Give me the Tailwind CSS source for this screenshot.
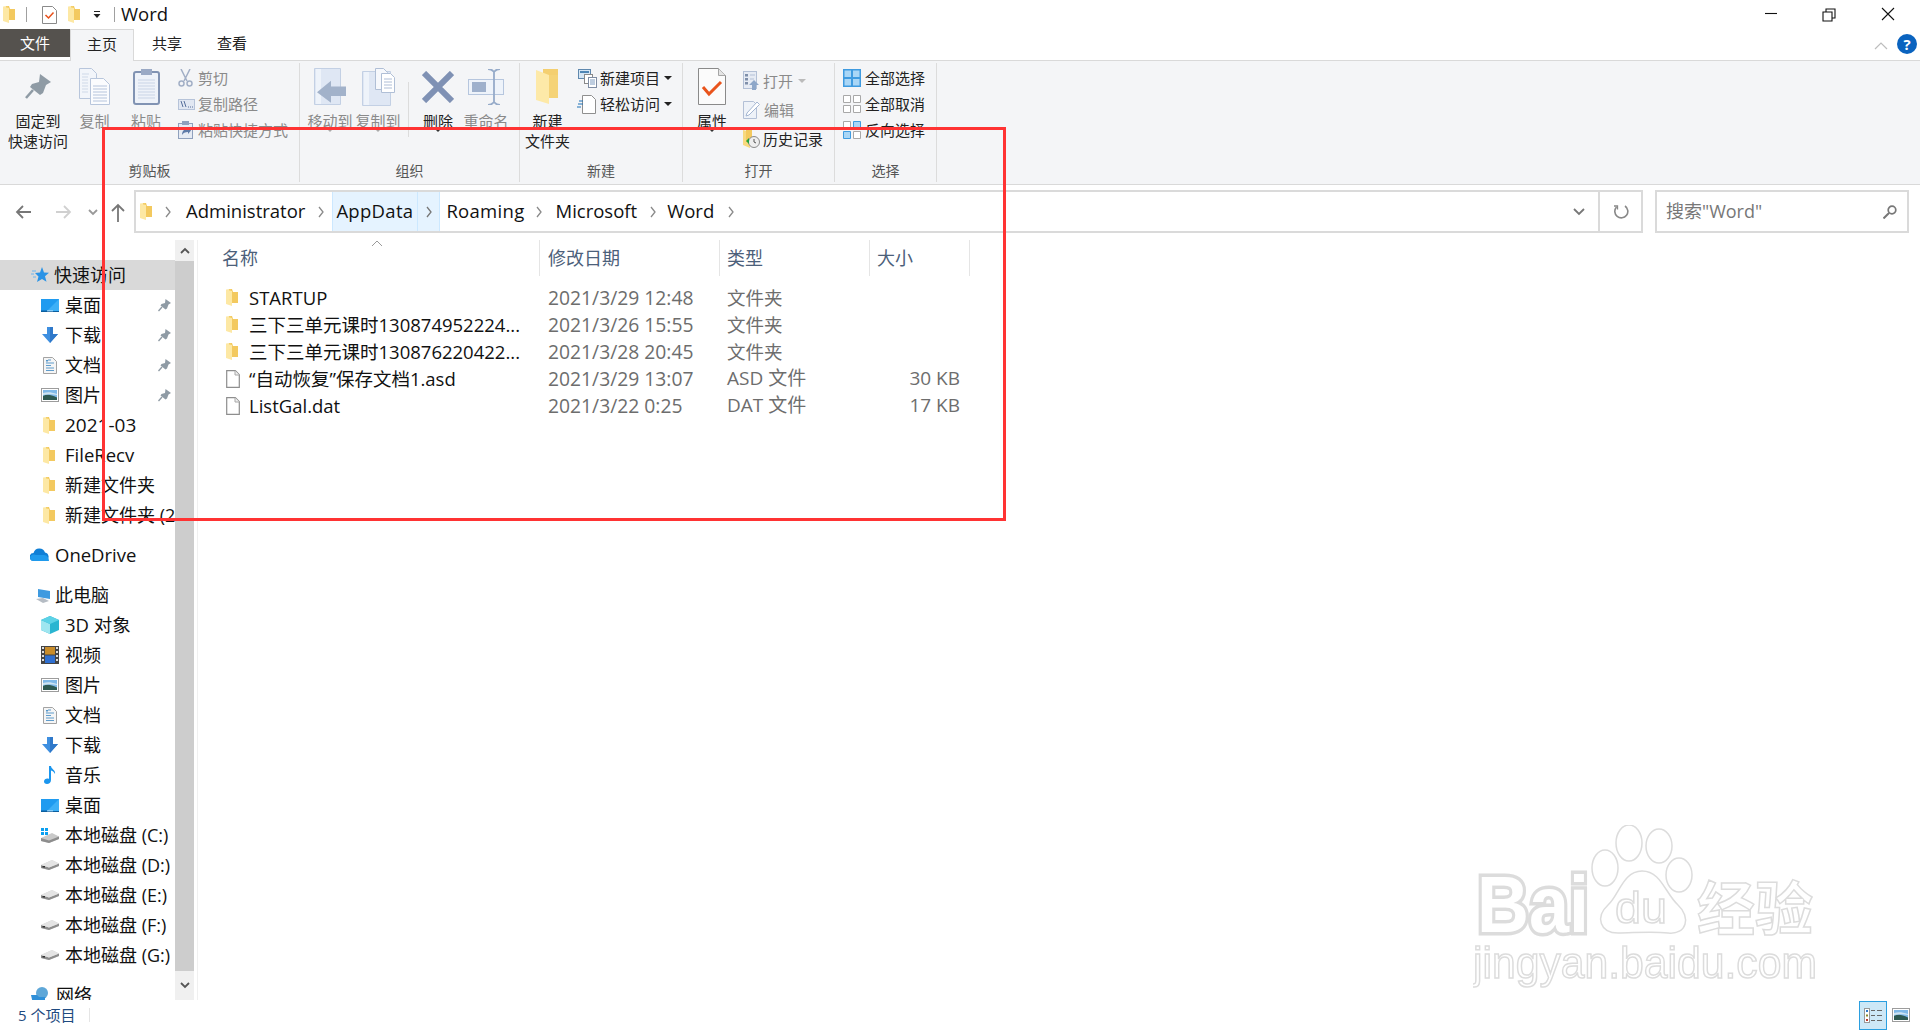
<!DOCTYPE html>
<html lang="zh-CN">
<head>
  <meta charset="UTF-8">
  <title>Word</title>
  <script src="https://cdn.jsdelivr.net/npm/@tailwindcss/browser@4"></script>
</head>
<body class="bg-white">

<!-- shared icons -->
<svg class="hidden">
  <symbol id="folder" viewBox="0 0 12 17"><path d="M3 0h3l1 3h5v11H3z" fill="#f3c95f"/><path d="M0 0.500l6 1.500v15l-6-2z" fill="#fde8a4"/><path d="M0 0.500h5v1.200z" fill="#f8d877"/></symbol>
  <symbol id="pin" viewBox="0 0 26 26"><path d="M15 0l11 8-5 3-3 8-3 2-10-8 2-3 7-2z" fill="#8f9ba5"/><path d="M8 16l-7 8" stroke="#8f9ba5" stroke-width="2.500"/></symbol>
  <symbol id="desktop" viewBox="0 0 18 13"><rect width="18" height="13" fill="#1f9bf0"/><rect y="11.500" width="18" height="1.500" fill="#0c5e9e"/><path d="M18 0v12H6z" fill="#3db0f7"/><rect x="6" y="11.500" width="6" height=".8" fill="#cfe9fb"/></symbol>
  <symbol id="download" viewBox="0 0 16 16"><path d="M5 0h6v7h5l-8 9-8-9h5z" fill="#3e8fe0"/><path d="M8 0h3v7h5l-8 9z" fill="#2f78c9"/></symbol>
  <symbol id="docs" viewBox="0 0 14 17"><path d="M.5.500h9l4 4v12H.500z" fill="#f5f5f5" stroke="#a3a3a3"/><path d="M5 3h3M3 6h8M3 8.500h5M3 11h8M3 13.500h8" stroke="#5f9ccc" stroke-width="1.200"/><path d="M3 3l2 0-1 2.500z" fill="#2f7fbf"/></symbol>
  <symbol id="pics" viewBox="0 0 18 14"><rect x=".5" y=".5" width="17" height="13" fill="#fff" stroke="#9c9c9c"/><rect x="2" y="2" width="14" height="10" fill="#7fb9e8"/><path d="M2 8c4-2 7-2 14 1.500V12H2z" fill="#2e5a52"/><path d="M2 5c4-1 8-1 14 1v1c-5-1-9-1-14 0z" fill="#cfe4f2"/></symbol>
  <symbol id="disk" viewBox="0 0 18 10"><path d="M0 5L11 0l7 3.500V6L8 10 0 8z" fill="#d2d2d2"/><path d="M0 5l8 2.500L18 3.500V6L8 10 0 8z" fill="#8d8d8d"/><path d="M0 5L11 0l7 3.500L8 7.500z" fill="#e4e4e4"/><rect x="1.500" y="6" width="2.500" height="1.500" fill="#333"/></symbol>
  <symbol id="file" viewBox="0 0 14 18"><path d="M.7.700h8.600l4 4v12.600H.700z" fill="#fff" stroke="#8e8e8e" stroke-width="1.200"/><path d="M9 .7v4.300h4.300" fill="#efefef" stroke="#a8a8a8"/></symbol>
</svg>

<div class="relative w-[1920px] h-[1030px] overflow-hidden flex flex-col bg-white text-[#111] [font-family:'Open_Sans','Noto_Sans_CJK_SC',sans-serif]">

  <!-- title bar -->
  <div class="h-[29px] flex items-center shrink-0">
    <svg class="ml-[3px] w-[12px] h-[17px]"><use href="#folder"/></svg>
    <div class="ml-[11px] w-px h-[15px] bg-[#a0a0a0]"></div>
    <svg class="ml-[15px] w-[15px] h-[18px]" viewBox="0 0 15 18"><path d="M.5.500h10l4 4v13H.500z" fill="#fff" stroke="#8a8a8a"/><path d="M3.500 9l3 3 5-5.500" fill="none" stroke="#e8501a" stroke-width="1.500"/></svg>
    <svg class="ml-[11px] w-[12px] h-[17px]"><use href="#folder"/></svg>
    <svg class="ml-[12px] w-[10px] h-[8px]" viewBox="0 0 10 8"><path d="M2 0h6v1H2zM1.500 3h7L5 7z" fill="#222"/></svg>
    <div class="ml-[12px] w-px h-[15px] bg-[#a0a0a0]"></div>
    <div class="ml-[6px] mt-[-2px] text-[18.5px] leading-[29px] text-[#111]">Word</div>
    <div class="flex-1"></div>
    <svg class="w-[160px] h-[29px]" viewBox="0 0 160 29" fill="none" stroke="#111" stroke-width="1.100">
      <path d="M5 13.500h12"/>
      <path d="M63 12h9v9h-9zM66 12V9h9v9h-3"/>
      <path d="M122 8l12 12M134 8l-12 12"/>
    </svg>
  </div>

  <!-- tabs -->
  <div class="h-[31px] flex shrink-0 relative text-[15px] leading-[29px]">
    <div class="w-[70px] h-[28px] bg-[#55524e] text-white text-center">文件</div>
    <div class="w-[64px] h-[32px] bg-[#f4f5f7] border-x border-t border-[#d9d9d9] text-center relative z-10 text-[#222]">主页</div>
    <div class="ml-[18px] text-[#222]">共享</div>
    <div class="ml-[35px] text-[#222]">查看</div>
    <div class="flex-1"></div>
    <svg class="w-[14px] h-[31px] mr-[9px]" viewBox="0 0 14 31" fill="none" stroke="#bdbdbd" stroke-width="1.200"><path d="M1 20l6-6 6 6"/></svg>
    <div class="w-[20px] h-[20px] mt-[5px] mr-[3px] rounded-full bg-[#0a63bf] text-white text-[15px] leading-[20px] font-bold text-center">?</div>
  </div>

  <!-- ribbon -->
  <div class="h-[125px] shrink-0 flex bg-[#f4f5f7] border-y border-[#d9d9d9] pt-[2px] text-[15px] leading-[20px] text-[#222]">

    <div class="w-[300px] h-[119px] border-r border-[#dcdcdc] flex flex-col">
      <div class="h-[98px] flex">
        <div class="ml-[7px] w-[62px] flex flex-col items-center">
          <div class="h-[48px] flex items-center"><svg class="w-[26px] h-[26px]"><use href="#pin"/></svg></div>
          <div>固定到</div><div>快速访问</div>
        </div>
        <div class="w-[51px] flex flex-col items-center text-[#8a8a8a]">
          <div class="h-[48px] flex items-center pb-[1px]">
            <svg class="w-[31px] h-[37px]" viewBox="0 0 31 37"><path d="M.5.500h12l5 5v25H.500z" fill="#f2f5fa" stroke="#b8c6dc"/><path d="M11.500 10.500h13l6 6v20h-19z" fill="#fbfcfe" stroke="#b8c6dc"/><path d="M14 18h14M14 21h14M14 24h14M14 27h14M14 30h14M14 33h14" stroke="#b5c4dc"/><path d="M3 6h7M3 9h6M3 12h6M3 15h6M3 18h6M3 21h6M3 24h6" stroke="#cfd9e8"/></svg>
          </div>
          <div>复制</div>
        </div>
        <div class="w-[52px] flex flex-col items-center text-[#8a8a8a]">
          <div class="h-[48px] flex items-center pb-[1px]">
            <svg class="w-[27px] h-[37px]" viewBox="0 0 27 37"><rect x="1" y="4" width="25" height="32" rx="2" fill="#eef2f9" stroke="#8193b3" stroke-width="2"/><rect x="8" y="1" width="11" height="6" fill="#9aa9c5"/><path d="M5 12h17M5 15h17M5 18h17M5 21h17M5 24h17M5 27h17M5 30h17" stroke="#c9d4e6"/></svg>
          </div>
          <div>粘贴</div>
        </div>
        <div class="ml-[6px] pt-[2px] flex flex-col text-[#8a8a8a]">
          <div class="h-[26px] flex items-center gap-[5px]"><svg class="w-[15px] h-[18px]" viewBox="0 0 15 18" fill="none" stroke="#a2afc6" stroke-width="1.500"><path d="M3 0l6 12M12 0L6 12"/><circle cx="3.500" cy="14.500" r="2.500"/><circle cx="11.500" cy="14.500" r="2.500"/></svg><span>剪切</span></div>
          <div class="h-[26px] flex items-center gap-[3px]"><svg class="w-[17px] h-[11px]" viewBox="0 0 17 11"><rect x=".5" y=".5" width="16" height="10" fill="#e1e7f2" stroke="#b6c3d9"/><path d="M3 2l2 6M6 2l2 6" stroke="#566f9b"/><path d="M10 8h1M12 8h1M14 8h1" stroke="#566f9b"/></svg><span>复制路径</span></div>
          <div class="h-[26px] flex items-center gap-[5px]"><svg class="w-[15px] h-[18px]" viewBox="0 0 15 18"><rect x=".5" y="2.500" width="14" height="15" fill="#e6ebf4" stroke="#8fa0bd"/><rect x="4" y="0" width="7" height="4" fill="#8fa0bd"/><path d="M4 14c0-4 2-6 6-6V6l3 3.500-3 3.500v-2c-3 0-5 1-6 3z" fill="#5d7aa8"/></svg><span>粘贴快捷方式</span></div>
        </div>
      </div>
      <div class="text-center text-[14px] text-[#555]">剪贴板</div>
    </div>

    <div class="w-[220px] h-[119px] border-r border-[#dcdcdc] flex flex-col">
      <div class="h-[98px] flex">
        <div class="ml-[6px] w-[48px] flex flex-col items-center text-[#8a8a8a]">
          <div class="h-[48px] flex items-center pb-[1px]">
            <svg class="w-[33px] h-[37px]" viewBox="0 0 33 37"><path d="M.5.500h26v36H.500z" fill="#dfe7f4" stroke="#c3d0e4"/><path d="M2 1h5v35H2z" fill="#eef3fa"/><path d="M32 20H17v-6L3 26l14 11v-7h15z" transform="translate(0 -.5) scale(1 .95)" fill="#a2b2ca"/></svg>
          </div>
          <div>移动到</div>
          <div class="mt-[-3px] w-0 h-0 border-x-[4px] border-x-transparent border-t-[4px] border-t-[#aaa]"></div>
        </div>
        <div class="w-[48px] flex flex-col items-center text-[#8a8a8a]">
          <div class="h-[48px] flex items-center pb-[1px]">
            <svg class="w-[33px] h-[38px]" viewBox="0 0 33 38"><path d="M.5 3.500h28v34H.500z" fill="#dfe7f4" stroke="#c3d0e4"/><path d="M2 4h5v33H2z" fill="#eef3fa"/><path d="M13.500.500h8l4 4v17h-12z" fill="#f6f8fc" stroke="#b0bfd6"/><path d="M19.500 5.500h9l4 4v15h-13z" fill="#fff" stroke="#b0bfd6"/><path d="M22 11h8M22 14h8M22 17h8M22 20h8" stroke="#aebdd6"/></svg>
          </div>
          <div>复制到</div>
          <div class="mt-[-3px] w-0 h-0 border-x-[4px] border-x-transparent border-t-[4px] border-t-[#aaa]"></div>
        </div>
        <div class="ml-[6px] mr-[5px] mt-[19px] w-px h-[55px] bg-[#dcdcdc]"></div>
        <div class="w-[48px] flex flex-col items-center">
          <div class="h-[48px] flex items-center">
            <svg class="w-[32px] h-[32px]" viewBox="0 0 32 32" stroke="#7f91b4" stroke-width="6"><path d="M2 2l28 28M30 2L2 30"/></svg>
          </div>
          <div>删除</div>
          <div class="mt-[-3px] w-0 h-0 border-x-[4px] border-x-transparent border-t-[4px] border-t-[#333]"></div>
        </div>
        <div class="w-[48px] flex flex-col items-center text-[#8a8a8a]">
          <div class="h-[48px] flex items-center pb-[1px]">
            <svg class="w-[36px] h-[36px]" viewBox="0 0 36 36"><rect x=".5" y="10.500" width="35" height="15" fill="#eef3fa" stroke="#b6c6de"/><rect x="4" y="13" width="14" height="10" fill="#9eb0cc"/><path d="M21 0c4 0 5 2 6 3 1-1 2-3 6-3M27 3v30M21 36c4 0 5-2 6-3 1 1 2 3 6 3" fill="none" stroke="#96abc9" stroke-width="1.800" transform="translate(-1)"/></svg>
          </div>
          <div>重命名</div>
        </div>
      </div>
      <div class="text-center text-[14px] text-[#555]">组织</div>
    </div>

    <div class="w-[163px] h-[119px] border-r border-[#dcdcdc] flex flex-col">
      <div class="h-[98px] flex">
        <div class="w-[55px] flex flex-col items-center">
          <div class="h-[48px] flex items-center pb-[1px]">
            <svg class="w-[24px] h-[35px]" viewBox="0 0 24 35"><path d="M7 0h15v29H7z" fill="#f4cf70"/><path d="M0 1l13 5v29L0 31z" fill="#fde9a8"/><path d="M13 6h9v23H13z" fill="#f5d377"/></svg>
          </div>
          <div>新建</div><div>文件夹</div>
        </div>
        <div class="pt-[2px] flex flex-col">
          <div class="h-[26px] flex items-center"><svg class="ml-[3px] w-[19px] h-[19px]" viewBox="0 0 19 19"><rect x=".5" y=".5" width="12" height="9" fill="#d6e6f4" stroke="#5f88ae"/><rect x="2" y="2" width="9" height="2" fill="#4f86b5"/><rect x="6.500" y="5.500" width="8" height="9" fill="#fff" stroke="#8a8a8a"/><rect x="10.500" y="8.500" width="8" height="10" fill="#fff" stroke="#7f8da3"/><path d="M12 11h5M12 13h5M12 15h5" stroke="#7f9cc0"/></svg><span class="ml-[3px]">新建项目</span><span class="ml-[4px] w-0 h-0 border-x-[4px] border-x-transparent border-t-[4px] border-t-[#222]"></span></div>
          <div class="h-[26px] flex items-center"><svg class="ml-[2px] w-[19px] h-[19px]" viewBox="0 0 19 19"><path d="M5.500.500h9l4 4v14h-13z" fill="#fff" stroke="#8f8f8f"/><path d="M2 6h4M1 9h5M0 12h4" stroke="#1d72b8" stroke-width="1.200"/></svg><span class="ml-[4px]">轻松访问</span><span class="ml-[4px] w-0 h-0 border-x-[4px] border-x-transparent border-t-[4px] border-t-[#222]"></span></div>
        </div>
      </div>
      <div class="text-center text-[14px] text-[#555]">新建</div>
    </div>

    <div class="w-[152px] h-[119px] border-r border-[#dcdcdc] flex flex-col">
      <div class="h-[98px] flex">
        <div class="w-[58px] flex flex-col items-center">
          <div class="h-[48px] flex items-center pb-[1px]">
            <svg class="w-[28px] h-[37px]" viewBox="0 0 28 37"><path d="M.5.500h20l7 7v29H.500z" fill="#fbfbfb" stroke="#8a8a8a"/><path d="M20.500.500v7h7" fill="#e4e4e4" stroke="#a5a5a5"/><path d="M5 19l6 7 12-12" fill="none" stroke="#e9541c" stroke-width="3"/></svg>
          </div>
          <div>属性</div>
          <div class="mt-[-3px] w-0 h-0 border-x-[4px] border-x-transparent border-t-[4px] border-t-[#333]"></div>
        </div>
        <div class="pt-[3px] flex flex-col ml-[2px]">
          <div class="h-[29px] flex items-center text-[#8a8a8a]"><svg class="w-[17px] h-[19px]" viewBox="0 0 17 19"><rect x=".5" y=".5" width="13" height="17" fill="#e6ebf4" stroke="#b3c0d6"/><path d="M2 3h3v2.500H2zM2 7h3v2.500H2zM2 11h3v2.500H2z" fill="#7f8faa"/><path d="M7 4h5M7 8h4" stroke="#b3c0d6"/><path d="M11 9l5 5h-3v5h-4v-5H6z" fill="#8ea7c9"/></svg><span class="ml-[3px]">打开</span><span class="ml-[5px] w-0 h-0 border-x-[4px] border-x-transparent border-t-[4px] border-t-[#bbb]"></span></div>
          <div class="h-[29px] flex items-center text-[#8a8a8a]"><svg class="w-[17px] h-[19px]" viewBox="0 0 17 19"><path d="M.5 1.500h10l3 3v14H.500z" fill="#eef2f8" stroke="#b3c0d6"/><path d="M4 13L14 2l2.500 2.500L6 15l-3 1z" fill="#fff" stroke="#a4b6d2"/></svg><span class="ml-[4px]">编辑</span></div>
          <div class="h-[29px] flex items-center"><svg class="w-[17px] h-[18px]" viewBox="0 0 17 18"><path d="M0 0l7 2v16l-7-3z" fill="#f8d980"/><path d="M3 0h6v12H3z" fill="#f3c95f"/><circle cx="11" cy="12" r="5.500" fill="#eee" stroke="#8a8a8a"/><path d="M11 9v3l2 1" fill="none" stroke="#555"/><path d="M3 11l3-3v6z" fill="#22a33c"/></svg><span class="ml-[3px]">历史记录</span></div>
        </div>
      </div>
      <div class="text-center text-[14px] text-[#555]">打开</div>
    </div>

    <div class="w-[102px] h-[119px] border-r border-[#dcdcdc] flex flex-col">
      <div class="h-[98px] pt-[2px] pl-[8px] flex flex-col">
        <div class="h-[26px] flex items-center gap-[4px]"><svg class="w-[18px] h-[18px]" viewBox="0 0 18 18"><path d="M0 0h18v18H0z" fill="#3f9be0"/><path d="M1.500 1.500h6.500v6.500H1.500zM10 1.500h6.500v6.500H10zM1.500 10h6.500v6.500H1.500zM10 10h6.500v6.500H10z" fill="#a9d6f6"/></svg><span>全部选择</span></div>
        <div class="h-[26px] flex items-center gap-[4px]"><svg class="w-[18px] h-[18px]" viewBox="0 0 18 18" fill="#fff" stroke="#a8a8a8"><path d="M.5.500h7v7h-7zM10.500.500h7v7h-7zM.5 10.500h7v7h-7zM10.500 10.500h7v7h-7z"/></svg><span>全部取消</span></div>
        <div class="h-[26px] flex items-center gap-[4px]"><svg class="w-[18px] h-[18px]" viewBox="0 0 18 18"><path d="M.5.500h7v7h-7zM10.500 10.500h7v7h-7z" fill="#fff" stroke="#a8a8a8"/><path d="M10.500.500h7v7h-7zM.5 10.500h7v7h-7z" fill="#a9d6f6" stroke="#3f9be0"/></svg><span>反向选择</span></div>
      </div>
      <div class="text-center text-[14px] text-[#555]">选择</div>
    </div>
  </div>

  <!-- address row -->
  <div class="h-[55px] shrink-0 flex items-start pt-[5px]">
    <svg class="w-[134px] h-[43px]" viewBox="0 0 134 43" fill="none" stroke-width="1.800">
      <path d="M31 22H17M23 16l-6 6 6 6" stroke="#777"/>
      <path d="M70 22H56M64 16l6 6-6 6" stroke="#d0d0d0"/>
      <path d="M89 20l4 4 4-4" stroke="#999"/>
      <path d="M118 32V15M112 21l6-6 6 6" stroke="#777"/>
    </svg>
    <div class="w-[1509px] h-[43px] border-2 border-[#dadada] flex items-center text-[18.5px] text-[#111]">
      <svg class="ml-[4px] w-[12px] h-[17px]"><use href="#folder"/></svg>
      <svg class="ml-[12px] w-[8px] h-[12px]" viewBox="0 0 8 12" fill="none" stroke="#8a8a8a" stroke-width="1.300"><path d="M2 1l4 5-4 5"/></svg>
      <span class="ml-[14px] mt-[-2px]">Administrator</span>
      <svg class="ml-[12px] w-[8px] h-[12px]" viewBox="0 0 8 12" fill="none" stroke="#8a8a8a" stroke-width="1.300"><path d="M2 1l4 5-4 5"/></svg>
      <div class="ml-[7px] w-[108px] h-[39px] bg-[#e5f3ff] border-x border-[#cce8ff] flex items-center">
        <span class="pl-[3px] w-[85px] h-[39px] leading-[37px] border-r border-[#cce8ff] tracking-[0.3px]">AppData</span>
        <svg class="ml-[7px] w-[8px] h-[12px]" viewBox="0 0 8 12" fill="none" stroke="#777" stroke-width="1.300"><path d="M2 1l4 5-4 5"/></svg>
      </div>
      <span class="ml-[6px] mt-[-2px] tracking-[0.3px]">Roaming</span>
      <svg class="ml-[10px] w-[8px] h-[12px]" viewBox="0 0 8 12" fill="none" stroke="#8a8a8a" stroke-width="1.300"><path d="M2 1l4 5-4 5"/></svg>
      <span class="ml-[13px] mt-[-2px]">Microsoft</span>
      <svg class="ml-[12px] w-[8px] h-[12px]" viewBox="0 0 8 12" fill="none" stroke="#8a8a8a" stroke-width="1.300"><path d="M2 1l4 5-4 5"/></svg>
      <span class="ml-[10px] mt-[-2px]">Word</span>
      <svg class="ml-[13px] w-[8px] h-[12px]" viewBox="0 0 8 12" fill="none" stroke="#8a8a8a" stroke-width="1.300"><path d="M2 1l4 5-4 5"/></svg>
      <div class="flex-1"></div>
      <svg class="w-[12px] h-[8px] mr-[13px]" viewBox="0 0 12 8" fill="none" stroke="#777" stroke-width="1.800"><path d="M1 1l5 5 5-5"/></svg>
      <div class="w-[43px] h-[39px] border-l-2 border-[#dadada] flex items-center justify-center">
        <svg class="w-[16px] h-[16px]" viewBox="0 0 16 16" fill="none" stroke="#888" stroke-width="1.600"><path d="M3.500 3A6.500 6.500 0 1 0 12 2"/><path d="M1 2h3.500v3.500" stroke-width="1.300"/></svg>
      </div>
    </div>
    <div class="ml-[12px] w-[254px] h-[43px] border-2 border-[#dadada] flex items-center justify-between pl-[9px] pr-[10px] text-[18px] text-[#777]">
      <span>搜索"Word"</span>
      <svg class="w-[14px] h-[14px]" viewBox="0 0 14 14" fill="none" stroke="#777" stroke-width="1.700"><circle cx="9" cy="5" r="3.800"/><path d="M6 8l-5.500 5.500" stroke-width="2"/></svg>
    </div>
  </div>

  <!-- nav + list -->
  <div class="h-[760px] shrink-0 flex">
    <div class="w-[175px] h-[760px] overflow-hidden pt-[20px] text-[18px] leading-[30px] text-[#111] whitespace-nowrap">
      <div class="h-[30px] bg-[#d9d9d9] flex items-center pl-[31px]"><svg class="w-[18px] h-[18px]" viewBox="0 0 18 18"><path d="M11 1l2 5.500 5 .3-4 3.500 1.500 5.500L11 13l-5 3 1.500-5.500L4 7l5-.5z" fill="#2a93e6"/><path d="M1 5h4M0 8h3M2 11h3" stroke="#6db5ee"/></svg><span class="ml-[5px]">快速访问</span></div>
      <div class="h-[30px] flex items-center pl-[41px]"><svg class="w-[18px] h-[13px]"><use href="#desktop"/></svg><span class="ml-[6px] flex-1">桌面</span><svg class="w-[13px] h-[13px] mr-[4px]"><use href="#pin"/></svg></div>
      <div class="h-[30px] flex items-center pl-[42px]"><svg class="w-[16px] h-[16px]"><use href="#download"/></svg><span class="ml-[7px] flex-1">下载</span><svg class="w-[13px] h-[13px] mr-[4px]"><use href="#pin"/></svg></div>
      <div class="h-[30px] flex items-center pl-[43px]"><svg class="w-[14px] h-[17px]"><use href="#docs"/></svg><span class="ml-[8px] flex-1">文档</span><svg class="w-[13px] h-[13px] mr-[4px]"><use href="#pin"/></svg></div>
      <div class="h-[30px] flex items-center pl-[41px]"><svg class="w-[18px] h-[14px]"><use href="#pics"/></svg><span class="ml-[6px] flex-1">图片</span><svg class="w-[13px] h-[13px] mr-[4px]"><use href="#pin"/></svg></div>
      <div class="h-[30px] flex items-center pl-[43px]"><svg class="w-[12px] h-[17px]"><use href="#folder"/></svg><span class="ml-[10px] text-[19px]">2021-03</span></div>
      <div class="h-[30px] flex items-center pl-[43px]"><svg class="w-[12px] h-[17px]"><use href="#folder"/></svg><span class="ml-[10px] text-[18.5px]">FileRecv</span></div>
      <div class="h-[30px] flex items-center pl-[43px]"><svg class="w-[12px] h-[17px]"><use href="#folder"/></svg><span class="ml-[10px]">新建文件夹</span></div>
      <div class="h-[30px] flex items-center pl-[43px]"><svg class="w-[12px] h-[17px] shrink-0"><use href="#folder"/></svg><span class="ml-[10px]">新建文件夹 (2)</span></div>

      <div class="h-[30px] mt-[10px] flex items-center pl-[30px]"><svg class="w-[20px] h-[14px]" viewBox="0 0 20 14"><path d="M4 13a4 4 0 0 1-.5-8A6 6 0 0 1 15 4.500 4.500 4.500 0 0 1 16 13z" fill="#0f7fd6"/><path d="M0 10a4 4 0 0 1 6-3h8c3 0 5 3 5 6H4c-2 0-4-1-4-3z" fill="#1f9aec"/></svg><span class="ml-[5px] text-[18.5px]">OneDrive</span></div>

      <div class="h-[30px] mt-[10px] flex items-center pl-[35px]"><svg class="w-[15px] h-[15px]" viewBox="0 0 15 15"><path d="M3 1l12 2v8L3 9z" fill="#3e9ae0"/><path d="M1 11l7-1 6 3-6 2z" fill="#b5bcc4"/></svg><span class="ml-[5px]">此电脑</span></div>
      <div class="h-[30px] flex items-center pl-[41px]"><svg class="w-[18px] h-[18px]" viewBox="0 0 18 18"><path d="M9 0l9 4v10l-9 4-9-4V4z" fill="#2ab5d1"/><path d="M0 4l9 4v10l-9-4z" fill="#9fe6f0"/><path d="M9 0l9 4-9 4-9-4z" fill="#5dd2e6"/></svg><span class="ml-[6px] text-[18.5px]">3D 对象</span></div>
      <div class="h-[30px] flex items-center pl-[41px]"><svg class="w-[18px] h-[18px]" viewBox="0 0 18 18"><rect width="18" height="18" fill="#444"/><path d="M1 1h2v2H1zM1 5h2v2H1zM1 9h2v2H1zM1 13h2v2H1zM15 1h2v2h-2zM15 5h2v2h-2zM15 9h2v2h-2zM15 13h2v2h-2z" fill="#ddd"/><rect x="4" y="1" width="10" height="7.500" fill="#c88c2a"/><rect x="4" y="9.500" width="10" height="7.500" fill="#2f6fd0"/></svg><span class="ml-[6px]">视频</span></div>
      <div class="h-[30px] flex items-center pl-[41px]"><svg class="w-[18px] h-[14px]"><use href="#pics"/></svg><span class="ml-[6px]">图片</span></div>
      <div class="h-[30px] flex items-center pl-[43px]"><svg class="w-[14px] h-[17px]"><use href="#docs"/></svg><span class="ml-[8px]">文档</span></div>
      <div class="h-[30px] flex items-center pl-[42px]"><svg class="w-[16px] h-[16px]"><use href="#download"/></svg><span class="ml-[7px]">下载</span></div>
      <div class="h-[30px] flex items-center pl-[44px]"><svg class="w-[12px] h-[18px]" viewBox="0 0 12 18"><path d="M5 0h2c0 3 5 4 4 8-1-2-2-3-4-3.500V14c0 2.500-2 4-4 4s-3-1-3-2.500C0 13 3 12 5 13z" fill="#1b96ee"/></svg><span class="ml-[9px]">音乐</span></div>
      <div class="h-[30px] flex items-center pl-[41px]"><svg class="w-[18px] h-[13px]"><use href="#desktop"/></svg><span class="ml-[6px]">桌面</span></div>
      <div class="h-[30px] flex items-center pl-[40px]"><svg class="w-[19px] h-[15px]" viewBox="0 0 19 15"><path d="M1 0h3v3H1zM5 0h3v3H5zM1 4h3v3H1zM5 4h3v3H5z" fill="#0a9ff0"/><path d="M1 10l11-5 7 3.500V11l-10 4-8-2z" fill="#c9c9c9"/><path d="M1 10l8 2.500 10-4V11l-10 4-8-2z" fill="#8d8d8d"/></svg><span class="ml-[6px]">本地磁盘 (C:)</span></div>
      <div class="h-[30px] flex items-center pl-[41px]"><svg class="w-[18px] h-[10px]"><use href="#disk"/></svg><span class="ml-[6px]">本地磁盘 (D:)</span></div>
      <div class="h-[30px] flex items-center pl-[41px]"><svg class="w-[18px] h-[10px]"><use href="#disk"/></svg><span class="ml-[6px]">本地磁盘 (E:)</span></div>
      <div class="h-[30px] flex items-center pl-[41px]"><svg class="w-[18px] h-[10px]"><use href="#disk"/></svg><span class="ml-[6px]">本地磁盘 (F:)</span></div>
      <div class="h-[30px] flex items-center pl-[41px]"><svg class="w-[18px] h-[10px]"><use href="#disk"/></svg><span class="ml-[6px]">本地磁盘 (G:)</span></div>

      <div class="h-[30px] mt-[10px] flex items-center pl-[31px]"><svg class="w-[18px] h-[17px]" viewBox="0 0 18 17"><circle cx="11" cy="6" r="6" fill="#5ea7d8"/><path d="M0 8h6l2 2h6v7H2z" fill="#2f8fd8"/></svg><span class="ml-[7px]">网络</span></div>
    </div>

    <!-- scrollbar -->
    <div class="w-[19px] bg-[#f0f0f0] flex flex-col shrink-0">
      <div class="h-[21px] flex items-center justify-center"><svg class="w-[10px] h-[7px]" viewBox="0 0 10 7" fill="none" stroke="#555" stroke-width="1.800"><path d="M1 6l4-4 4 4"/></svg></div>
      <div class="h-[710px] bg-[#cdcdcd]"></div>
      <div class="flex-1 flex items-center justify-center"><svg class="w-[10px] h-[7px]" viewBox="0 0 10 7" fill="none" stroke="#555" stroke-width="1.800"><path d="M1 1l4 4 4-4"/></svg></div>
    </div>

    <!-- file list -->
    <div class="ml-[3px] flex-1 border-l border-[#f0f0f0] relative">
      <div class="h-[36px] flex text-[18px] leading-[37px] text-[#4c607a]">
        <div class="w-[342px] pl-[24px] border-r border-[#e5e5e5]">名称</div>
        <div class="w-[180px] pl-[8px] border-r border-[#e5e5e5]">修改日期</div>
        <div class="w-[150px] pl-[7px] border-r border-[#e5e5e5]">类型</div>
        <div class="w-[100px] pl-[7px] border-r border-[#e5e5e5]">大小</div>
      </div>
      <svg class="absolute left-[173px] top-[0px] w-[12px] h-[7px]" viewBox="0 0 12 7" fill="none" stroke="#9a9a9a"><path d="M1 6l5-5 5 5"/></svg>

      <div class="mt-[8px] text-[19px] leading-[27px] text-[#6d6d6d]">
        <div class="h-[27px] flex items-center">
          <div class="w-[342px] pl-[28px] flex items-center text-[18.5px] text-[#111]"><svg class="w-[12px] h-[17px]"><use href="#folder"/></svg><span class="ml-[11px]">STARTUP</span></div>
          <div class="w-[180px] pl-[8px] text-[19.3px]">2021/3/29 12:48</div><div class="w-[150px] pl-[7px] text-[18.5px]">文件夹</div>
        </div>
        <div class="h-[27px] flex items-center">
          <div class="w-[342px] pl-[28px] flex items-center text-[18.5px] text-[#111]"><svg class="w-[12px] h-[17px]"><use href="#folder"/></svg><span class="ml-[11px]">三下三单元课时130874952224...</span></div>
          <div class="w-[180px] pl-[8px] text-[19.3px]">2021/3/26 15:55</div><div class="w-[150px] pl-[7px] text-[18.5px]">文件夹</div>
        </div>
        <div class="h-[27px] flex items-center">
          <div class="w-[342px] pl-[28px] flex items-center text-[18.5px] text-[#111]"><svg class="w-[12px] h-[17px]"><use href="#folder"/></svg><span class="ml-[11px]">三下三单元课时130876220422...</span></div>
          <div class="w-[180px] pl-[8px] text-[19.3px]">2021/3/28 20:45</div><div class="w-[150px] pl-[7px] text-[18.5px]">文件夹</div>
        </div>
        <div class="h-[27px] flex items-center">
          <div class="w-[342px] pl-[28px] flex items-center text-[18.5px] text-[#111]"><svg class="w-[14px] h-[18px]"><use href="#file"/></svg><span class="ml-[9px]">“自动恢复”保存文档1.asd</span></div>
          <div class="w-[180px] pl-[8px] text-[19.3px]">2021/3/29 13:07</div><div class="w-[150px] pl-[7px]">ASD 文件</div><div class="w-[90px] text-right">30 KB</div>
        </div>
        <div class="h-[27px] flex items-center">
          <div class="w-[342px] pl-[28px] flex items-center text-[18.5px] text-[#111]"><svg class="w-[14px] h-[18px]"><use href="#file"/></svg><span class="ml-[9px]">ListGal.dat</span></div>
          <div class="w-[180px] pl-[8px] text-[19.3px]">2021/3/22 0:25</div><div class="w-[150px] pl-[7px]">DAT 文件</div><div class="w-[90px] text-right">17 KB</div>
        </div>
      </div>
    </div>
  </div>

  <!-- status bar -->
  <div class="flex-1 flex items-center relative text-[15px] text-[#1e4a80]">
    <span class="ml-[18px]">5 个项目</span>
    <div class="ml-[14px] w-px h-[14px] bg-[#e5e5e5]"></div>
    <div class="flex-1"></div>
    <div class="w-[28px] h-[29px] bg-[#cde8f7] border border-[#2b9fe0] flex items-center justify-center">
      <svg class="w-[18px] h-[15px]" viewBox="0 0 18 15"><rect x=".5" y=".5" width="5" height="14" fill="#fff" stroke="#999"/><rect x="2" y="2" width="2" height="2" fill="#2f78c9"/><rect x="2" y="6.500" width="2" height="2" fill="#8a8a2a"/><rect x="2" y="11" width="2" height="2" fill="#c0392b"/><path d="M7 2.500h4M13 2.500h5M7 7.500h4M13 7.500h5M7 12.500h4M13 12.500h5" stroke="#666"/></svg>
    </div>
    <svg class="ml-[5px] mr-[10px] w-[18px] h-[14px]"><use href="#pics"/></svg>
  </div>

  <!-- watermark -->
  <svg class="absolute left-[1473px] top-[825px] w-[350px] h-[170px] blur-[0.4px]" viewBox="0 0 350 170" fill="#fff" stroke="#dcdcdc" stroke-width="1.500">
    <ellipse cx="132" cy="43" rx="13" ry="18"/>
    <ellipse cx="156" cy="18" rx="13" ry="18"/>
    <ellipse cx="186" cy="21" rx="13" ry="17"/>
    <ellipse cx="206" cy="50" rx="13" ry="17"/>
    <path d="M169 46C150 46 146 70 135 80 122 92 127 108 145 108 160 108 178 106 195 108 214 110 218 92 205 80 192 68 188 46 169 46z"/>
    <text x="4" y="107" font-size="80" font-weight="700" textLength="112" lengthAdjust="spacingAndGlyphs" font-family="Liberation Sans" stroke-width="7" paint-order="stroke">Bai</text>
    <text x="142" y="98" font-size="44" textLength="52" lengthAdjust="spacingAndGlyphs" font-family="Liberation Sans">du</text>
    <text x="224" y="105" font-size="58" font-weight="700" font-family="Noto Sans CJK SC">经验</text>
    <text x="0" y="153" font-size="44" textLength="344" lengthAdjust="spacingAndGlyphs" font-family="Liberation Sans">jingyan.baidu.com</text>
  </svg>

  <!-- red annotation box -->
  <div class="absolute left-[102px] top-[127px] w-[904px] h-[394px] border-[3px] border-[#ff3333]"></div>
</div>
</body>
</html>
